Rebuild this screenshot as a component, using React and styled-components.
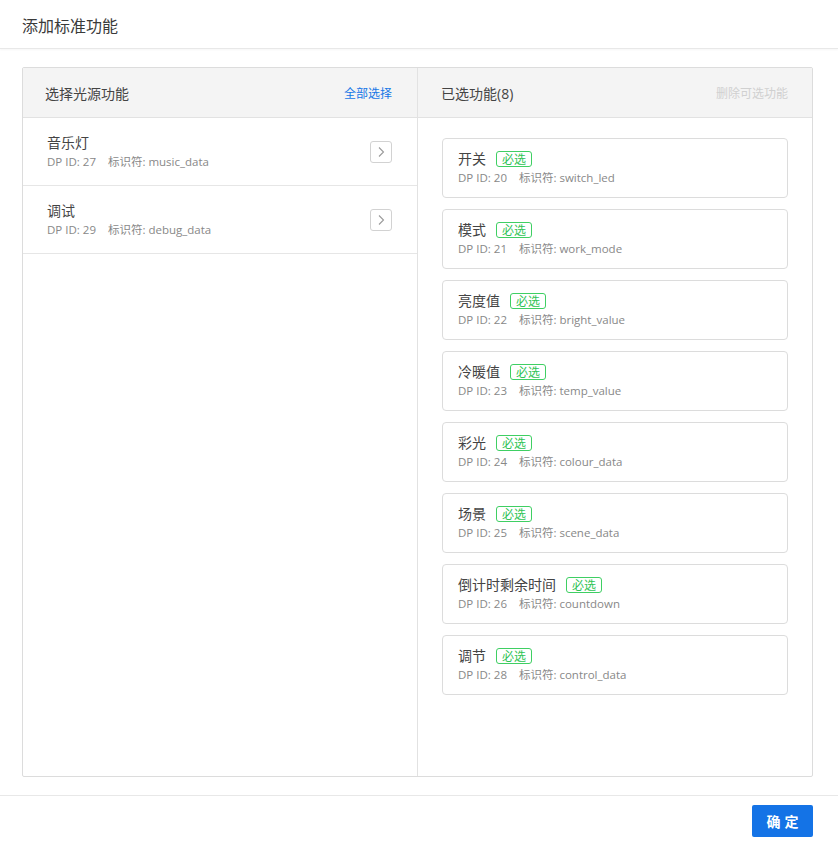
import React from "react";
import styled, { createGlobalStyle } from "styled-components";

const Global = createGlobalStyle`
  html, body { margin: 0; padding: 0; background: #fff; }
  body { font-family: "Open Sans", "Noto Sans CJK SC", sans-serif; color: #333; }
  * { box-sizing: border-box; }
`;

const Page = styled.div`
  width: 838px;
  height: 845px;
  display: flex;
  flex-direction: column;
  background: #fff;
`;

const Header = styled.div`
  height: 49px;
  flex: none;
  display: flex;
  align-items: center;
  padding: 1px 22px 0;
  border-bottom: 1px solid #e8e8e8;
  box-shadow: 0 1px 2px rgba(0, 0, 0, 0.04);
  font-size: 16px;
  color: #3a3a3a;
`;

const Body = styled.div`
  flex: 1;
  padding: 18px 25px 18px 22px;
  display: flex;
`;

const Panel = styled.div`
  flex: 1;
  display: grid;
  grid-template-columns: 394px 1fr;
  border: 1px solid #dcdcdc;
  border-radius: 2px;
  overflow: hidden;
`;

const Column = styled.div`
  display: flex;
  flex-direction: column;
  border-left: ${(p) => (p.$divided ? "1px solid #e2e2e2" : "none")};
  min-width: 0;
`;

const ColHead = styled.div`
  height: 50px;
  flex: none;
  display: flex;
  align-items: center;
  justify-content: space-between;
  padding: 0 ${(p) => p.$pr || 24}px 0 ${(p) => p.$pl || 22}px;
  background: #f4f4f4;
  border-bottom: 1px solid #e2e2e2;
  font-size: 14px;
  color: #444;
`;

const HeadAction = styled.span`
  font-family: "Noto Sans CJK SC", sans-serif;
  font-size: 12px;
  color: ${(p) => (p.$disabled ? "#d0d0d0" : "#1677e6")};
  cursor: pointer;
`;

const ListItem = styled.div`
  display: flex;
  align-items: center;
  justify-content: space-between;
  padding: 15px 25px 14px 24px;
  border-bottom: 1px solid #e6e6e6;
`;

const ItemText = styled.div`
  display: flex;
  flex-direction: column;
`;

const ItemTitle = styled.div`
  font-size: 14px;
  line-height: 20px;
  color: #444;
  display: flex;
  align-items: center;
`;

const Meta = styled.div`
  font-size: 11.5px;
  line-height: 18px;
  color: #888;
  white-space: pre;
`;

const ArrowBtn = styled.button`
  width: 22px;
  height: 22px;
  padding: 0;
  border: 1px solid #d2d2d2;
  border-radius: 3px;
  background: #fff;
  display: flex;
  align-items: center;
  justify-content: center;
  cursor: pointer;
`;

const CardList = styled.div`
  display: flex;
  flex-direction: column;
  gap: 11px;
  padding: 20px 24px 20px 24px;
`;

const Card = styled.div`
  height: 60px;
  border: 1px solid #dcdcdc;
  border-radius: 4px;
  padding: 10px 15px;
`;

const Tag = styled.span`
  margin-left: 10px;
  height: 16px;
  padding: 0 5px;
  border: 1px solid #3fcf63;
  border-radius: 3px;
  color: #2fc355;
  font-family: "Noto Sans CJK SC", sans-serif;
  font-size: 12px;
  line-height: 14px;
  display: inline-flex;
  align-items: center;
`;

const Footer = styled.div`
  flex: none;
  height: 50px;
  border-top: 1px solid #e8e8e8;
  display: flex;
  justify-content: flex-end;
  align-items: flex-start;
  padding: 9px 25px 0 0;
`;

const Primary = styled.button`
  width: 61px;
  height: 32px;
  border: none;
  border-radius: 2px;
  background: #1473e6;
  color: #fff;
  font-family: "Noto Sans CJK SC", sans-serif;
  font-size: 14px;
  font-weight: 700;
  letter-spacing: 4px;
  padding: 0 0 0 4px;
  cursor: pointer;
`;

const Chevron = () => (
  <svg width="10" height="12" viewBox="0 0 10 12" fill="none">
    <polyline points="3,1.5 7.5,6 3,10.5" stroke="#9a9a9a" strokeWidth="1.1" fill="none" />
  </svg>
);

const available = [
  { name: "音乐灯", id: 27, code: "music_data" },
  { name: "调试", id: 29, code: "debug_data" },
];

const selected = [
  { name: "开关", id: 20, code: "switch_led" },
  { name: "模式", id: 21, code: "work_mode" },
  { name: "亮度值", id: 22, code: "bright_value" },
  { name: "冷暖值", id: 23, code: "temp_value" },
  { name: "彩光", id: 24, code: "colour_data" },
  { name: "场景", id: 25, code: "scene_data" },
  { name: "倒计时剩余时间", id: 26, code: "countdown" },
  { name: "调节", id: 28, code: "control_data" },
];

export default function App() {
  return (
    <Page>
      <Global />
      <Header>添加标准功能</Header>
      <Body>
        <Panel>
          <Column>
            <ColHead $pr={25}>
              <span>选择光源功能</span>
              <HeadAction>全部选择</HeadAction>
            </ColHead>
            {available.map((f) => (
              <ListItem key={f.id}>
                <ItemText>
                  <ItemTitle>{f.name}</ItemTitle>
                  <Meta>{`DP ID: ${f.id}    标识符: ${f.code}`}</Meta>
                </ItemText>
                <ArrowBtn>
                  <Chevron />
                </ArrowBtn>
              </ListItem>
            ))}
          </Column>
          <Column $divided>
            <ColHead $pl={23} $pr={24}>
              <span>已选功能(8)</span>
              <HeadAction $disabled>删除可选功能</HeadAction>
            </ColHead>
            <CardList>
              {selected.map((f) => (
                <Card key={f.id}>
                  <ItemTitle>
                    {f.name}
                    <Tag>必选</Tag>
                  </ItemTitle>
                  <Meta>{`DP ID: ${f.id}    标识符: ${f.code}`}</Meta>
                </Card>
              ))}
            </CardList>
          </Column>
        </Panel>
      </Body>
      <Footer>
        <Primary>确定</Primary>
      </Footer>
    </Page>
  );
}
